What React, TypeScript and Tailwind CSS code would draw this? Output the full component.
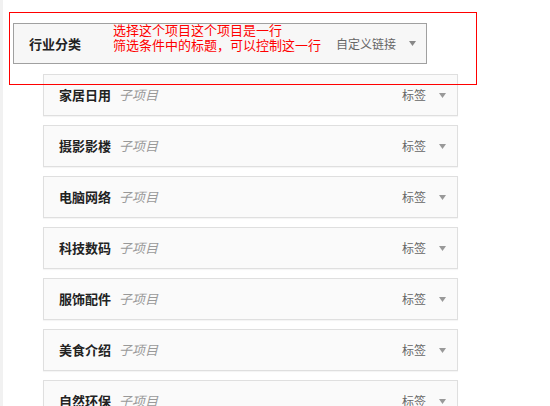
const items = ['家居日用', '摄影影楼', '电脑网络', '科技数码', '服饰配件', '美食介绍', '自然环保'];

function Arrow({ color }: { color: string }) {
  return (
    <svg width="7" height="5" viewBox="0 0 7 5" className="ml-[13px] shrink-0">
      <polygon points="0,0 7,0 3.5,5" fill={color} />
    </svg>
  );
}

export default function App() {
  return (
    <div className="relative flex h-[406px] w-[550px] overflow-hidden bg-white font-['Noto_Sans_CJK_SC','Microsoft_YaHei',sans-serif]">
      <div className="w-[3px] shrink-0 bg-[#f1f1f1]" />

      <div className="pl-[10px] pt-[23px]">
        {/* top-level menu item */}
        <div className="flex h-[41px] w-[414px] items-center border border-[#a0a0a0] bg-[#f7f7f7] pl-[15px] pr-[10px]">
          <span className="text-[13px] font-bold text-[#222]">行业分类</span>
          <span className="ml-auto text-[12px] text-[#666]">自定义链接</span>
          <Arrow color="#888" />
        </div>

        {/* sub items */}
        <div className="mt-[10px] flex flex-col gap-[9px] pl-[30px]">
          {items.map((name) => (
            <div
              key={name}
              className="flex h-[42px] w-[415px] shrink-0 items-center border border-[#dfdfdf] bg-[#fafafa] pl-[15px] pr-[11px] shadow-[0_1px_1px_rgba(0,0,0,0.04)]"
            >
              <span className="text-[13px] font-bold text-[#222]">{name}</span>
              <span className="ml-[8px] text-[13px] italic text-[#999]">子项目</span>
              <span className="ml-auto text-[12px] text-[#666]">标签</span>
              <Arrow color="#999" />
            </div>
          ))}
        </div>
      </div>

      {/* annotation overlay */}
      <div className="pointer-events-none absolute left-[9px] top-[12px] h-[73px] w-[468px] border border-[#ff0000]" />
      <div className="pointer-events-none absolute left-[113px] top-[22px] text-[13px] leading-[15px] text-[#ff0000]">
        <div>选择这个项目这个项目是一行</div>
        <div>筛选条件中的标题，可以控制这一行</div>
      </div>
    </div>
  );
}
